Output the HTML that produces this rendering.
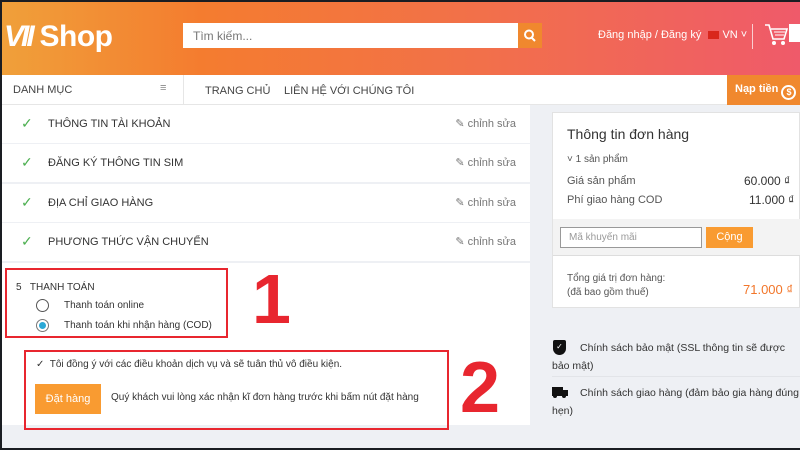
<!DOCTYPE html>
<html><head><meta charset="utf-8"><style>
*{margin:0;padding:0;box-sizing:border-box}
body{width:800px;height:450px;overflow:hidden;background:#1a1d22;font-family:"Liberation Sans",sans-serif;position:relative}
.page{position:absolute;left:2px;top:2px;width:798px;height:446px;background:#eef0f4;overflow:hidden}
.hdr{position:absolute;left:0;top:0;width:798px;height:73px;background:linear-gradient(90deg,#f0a03a 0%,#f47c2f 25%,#f2704a 60%,#ef5a6a 100%)}
.abs{position:absolute;white-space:nowrap}
.nav{position:absolute;left:0;top:73px;width:798px;height:30px;background:#fff;border-bottom:1px solid #e6e6e6;font-size:11px;color:#444}
.row{position:absolute;left:0;width:528px;height:38px;background:#fff;font-size:11px;color:#333}
.row .ck{position:absolute;left:19px;top:10px;color:#4caf50;font-size:14px}
.row .t{position:absolute;left:46px;top:13px}
.row .e{position:absolute;right:14px;top:12px;color:#777;font-size:11px}
.red{border:2px solid #e8262f;position:absolute}
.big{position:absolute;color:#e8262f;font-weight:bold;font-family:"Liberation Sans",sans-serif}
</style></head><body><div class="page">
<div class="hdr">
 <div class="abs" style="left:2px;top:18px;color:#fff;font-size:30px;font-weight:bold;letter-spacing:-0.5px">
  <span style="font-style:italic;letter-spacing:-3px">VII</span> Shop</div>
 <div class="abs" style="left:181px;top:21px;width:336px;height:25px;background:#fff;font-size:12px;color:#777;padding:6px 10px">Tìm kiếm...</div>
 <div class="abs" style="left:516px;top:21px;width:24px;height:25px;background:#f0882e">
  <svg width="24" height="25"><circle cx="11" cy="11.5" r="4" stroke="#fff" stroke-width="2" fill="none"/><line x1="14" y1="15" x2="17" y2="18" stroke="#fff" stroke-width="2"/></svg></div>
 <div class="abs" style="left:596px;top:27px;color:#fff;font-size:11px">Đăng nhập / Đăng ký <span style="display:inline-block;width:11px;height:8px;background:#d9261c;vertical-align:-1px;margin-left:4px"></span> VN ˅</div>
 <div class="abs" style="left:750px;top:22px;width:1px;height:25px;background:#fff;opacity:.7"></div>
 <svg class="abs" style="left:762px;top:20px" width="24" height="26"><path d="M1 3h4l4 14h11l3-10H7" stroke="#fff" stroke-width="1.6" fill="none"/><path d="M10 10h11M11 13h9" stroke="#fff" stroke-width="1"/><circle cx="10" cy="21" r="2" fill="#fff"/><circle cx="19" cy="21" r="2" fill="#fff"/></svg>
 <div class="abs" style="left:787px;top:22px;width:11px;height:18px;background:#fff"></div>
</div>
<div class="nav">
 <div class="abs" style="left:11px;top:9px">DANH MỤC</div>
 <div class="abs" style="left:158px;top:7px;color:#888">≡</div>
 <div class="abs" style="left:181px;top:0;width:1px;height:30px;background:#e6e6e6"></div>
 <div class="abs" style="left:203px;top:10px">TRANG CHỦ</div>
 <div class="abs" style="left:282px;top:10px">LIÊN HỆ VỚI CHÚNG TÔI</div>
 <div class="abs" style="left:725px;top:0;width:73px;height:30px;background:#f0882e;color:#fff;font-weight:bold;padding:8px 8px;font-size:11px">Nạp tiền <span style="display:inline-block;width:15px;height:15px;border:2px solid #fff;border-radius:50%;font-size:9px;text-align:center;line-height:11px;vertical-align:-3px">$</span></div>
</div>
<div class="row" style="top:103px"><span class="ck">✓</span><span class="t">THÔNG TIN TÀI KHOẢN</span><span class="e">✎ chỉnh sửa</span></div>
<div class="row" style="top:142px"><span class="ck">✓</span><span class="t">ĐĂNG KÝ THÔNG TIN SIM</span><span class="e">✎ chỉnh sửa</span></div>
<div class="row" style="top:182px"><span class="ck">✓</span><span class="t">ĐỊA CHỈ GIAO HÀNG</span><span class="e">✎ chỉnh sửa</span></div>
<div class="row" style="top:221px"><span class="ck">✓</span><span class="t">PHƯƠNG THỨC VẬN CHUYỂN</span><span class="e">✎ chỉnh sửa</span></div>
<div class="abs" style="left:0;top:261px;width:528px;height:162px;background:#fff"></div>
<div class="red" style="left:3px;top:266px;width:223px;height:70px"></div>
<div class="abs" style="left:14px;top:280px;font-size:10px;color:#333">5&nbsp;&nbsp;&nbsp;THANH TOÁN</div>
<div class="abs" style="left:34px;top:297px;width:13px;height:13px;border:1.5px solid #555;border-radius:50%"></div>
<div class="abs" style="left:62px;top:298px;font-size:10px;color:#333">Thanh toán online</div>
<div class="abs" style="left:34px;top:317px;width:13px;height:13px;border:1.5px solid #777;border-radius:50%;padding:2px"><div style="width:7px;height:7px;border-radius:50%;background:#2ba8d6;margin:-0.5px"></div></div>
<div class="abs" style="left:62px;top:318px;font-size:10px;color:#333">Thanh toán khi nhận hàng (COD)</div>
<div class="big" style="left:250px;top:262px;font-size:70px;line-height:70px">1</div>
<div class="red" style="left:22px;top:348px;width:425px;height:80px"></div>
<div class="abs" style="left:34px;top:357px;font-size:10px;color:#333">✓&nbsp; Tôi đồng ý với các điều khoản dịch vụ và sẽ tuân thủ vô điều kiện.</div>
<div class="abs" style="left:33px;top:382px;width:66px;height:30px;background:#f99b31;color:#fff;font-size:11px;text-align:center;line-height:30px">Đặt hàng</div>
<div class="abs" style="left:109px;top:390px;font-size:10px;color:#333">Quý khách vui lòng xác nhận kĩ đơn hàng trước khi bấm nút đặt hàng</div>
<div class="big" style="left:458px;top:350px;font-size:72px;line-height:72px">2</div>
<div class="abs" style="left:550px;top:110px;width:248px;height:196px;background:#fff;border:1px solid #e2e2e2"></div>
<div class="abs" style="left:565px;top:124px;font-size:14px;color:#333">Thông tin đơn hàng</div>
<div class="abs" style="left:565px;top:152px;font-size:10px;color:#555">˅ 1 sản phẩm</div>
<div class="abs" style="left:565px;top:173px;font-size:11px;color:#555">Giá sản phẩm</div>
<div class="abs" style="left:742px;top:172px;font-size:12px;color:#333">60.000 ₫</div>
<div class="abs" style="left:565px;top:192px;font-size:11px;color:#555">Phí giao hàng COD</div>
<div class="abs" style="left:747px;top:191px;font-size:12px;color:#333">11.000 ₫</div>
<div class="abs" style="left:551px;top:217px;width:247px;height:37px;background:#f3f3f3;border-bottom:1px solid #ddd"></div>
<div class="abs" style="left:558px;top:225px;width:142px;height:21px;background:#fff;border:1px solid #999;font-size:10px;color:#999;padding:4px 8px">Mã khuyến mãi</div>
<div class="abs" style="left:704px;top:225px;width:47px;height:21px;background:#f99b31;color:#fff;font-size:11px;text-align:center;line-height:21px">Cộng</div>
<div class="abs" style="left:565px;top:270px;font-size:10px;color:#555;line-height:14px">Tổng giá trị đơn hàng:<br>(đã bao gồm thuế)</div>
<div class="abs" style="left:741px;top:280px;font-size:13px;color:#f2762a">71.000 ₫</div>
<div class="abs" style="left:551px;top:338px;width:13px;height:15px;background:#111;border-radius:2px 2px 7px 7px;color:#fff;font-size:8px;text-align:center;line-height:14px">✓</div>
<div class="abs" style="left:550px;top:337px;width:250px;font-size:10.5px;color:#333;line-height:18px;text-indent:28px;white-space:normal">Chính sách bảo mật (SSL thông tin sẽ được bảo mật)</div>
<div class="abs" style="left:550px;top:374px;width:250px;height:1px;background:#e2e4e8"></div>
<div class="abs" style="left:550px;top:385px;width:11px;height:9px;background:#111"></div>
<div class="abs" style="left:561px;top:388px;width:5px;height:6px;background:#111"></div>
<div class="abs" style="left:551px;top:392px;width:4px;height:4px;background:#111;border-radius:50%"></div>
<div class="abs" style="left:560px;top:392px;width:4px;height:4px;background:#111;border-radius:50%"></div>
<div class="abs" style="left:550px;top:382px;width:250px;font-size:10.5px;color:#333;line-height:18px;text-indent:28px;white-space:normal">Chính sách giao hàng (đảm bảo gia hàng đúng hẹn)</div>
</div></body></html>
